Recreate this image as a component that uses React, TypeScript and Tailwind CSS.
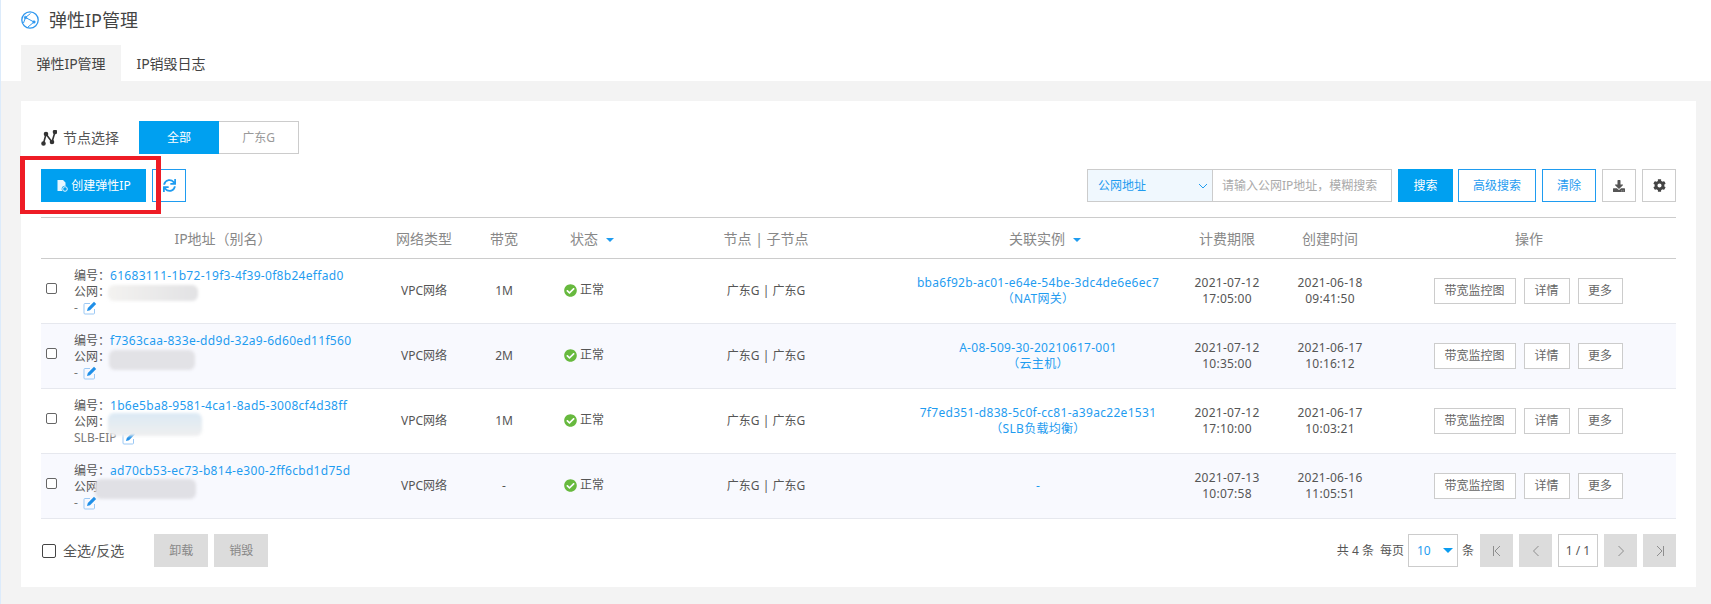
import { FaCheckCircle, FaCog, FaDownload, FaSync } from 'react-icons/fa';

const rows = [
  {
    id: '61683111-1b72-19f3-4f39-0f8b24effad0',
    alias: '-',
    bandwidth: '1M',
    instance: 'bba6f92b-ac01-e64e-54be-3dc4de6e6ec7',
    kind: '（NAT网关）',
    expire: ['2021-07-12', '17:05:00'],
    created: ['2021-06-18', '09:41:50'],
  },
  {
    id: 'f7363caa-833e-dd9d-32a9-6d60ed11f560',
    alias: '-',
    bandwidth: '2M',
    instance: 'A-08-509-30-20210617-001',
    kind: '（云主机）',
    expire: ['2021-07-12', '10:35:00'],
    created: ['2021-06-17', '10:16:12'],
  },
  {
    id: '1b6e5ba8-9581-4ca1-8ad5-3008cf4d38ff',
    alias: 'SLB-EIP',
    bandwidth: '1M',
    instance: '7f7ed351-d838-5c0f-cc81-a39ac22e1531',
    kind: '（SLB负载均衡）',
    expire: ['2021-07-12', '17:10:00'],
    created: ['2021-06-17', '10:03:21'],
  },
  {
    id: 'ad70cb53-ec73-b814-e300-2ff6cbd1d75d',
    alias: '-',
    bandwidth: '-',
    instance: '-',
    kind: '',
    expire: ['2021-07-13', '10:07:58'],
    created: ['2021-06-16', '11:05:51'],
  },
];

// smudges hiding the public IP in the screenshot
const blurs = [
  'left-[67px] top-[26px] h-[16px] w-[90px] bg-gradient-to-r from-[#f3f2f0] to-[#e2e2e4]',
  'left-[68px] top-[26px] h-[20px] w-[86px] bg-[#e2e2e6]',
  'left-[67px] top-[24px] h-[23px] w-[94px] bg-gradient-to-b from-[#dbe9f4] to-[#efefef]',
  'left-[54px] top-[25px] h-[20px] w-[101px] bg-[#e0e0e5]',
];

const Caret = () => <span className="ml-2 inline-block border-x-[4px] border-t-[4px] border-x-transparent border-t-[#1f9cf0] align-middle" />;

const EditIcon = () => (
  <svg viewBox="0 0 14 14" className="h-[14px] w-[14px]">
    <path d="M11.500 8v4a1 1 0 0 1-1 1H2a1 1 0 0 1-1-1V3.500a1 1 0 0 1 1-1h5" fill="none" stroke="#9cc9f5" strokeWidth="1" />
    <path d="M11 .8l2.200 2.200L7 9.200l-3 .8.8-3z" fill="#1f8fe8" />
  </svg>
);

const PageButton = ({ d }: { d: string }) => (
  <button className="flex h-[33px] w-[33px] items-center justify-center bg-[#dcdcdc]">
    <svg viewBox="0 0 14 14" className="h-[14px] w-[14px]">
      <path d={d} fill="none" stroke="#8e8e8e" strokeWidth="1" />
    </svg>
  </button>
);

export default function App() {
  return (
    <div className="h-[604px] overflow-hidden border-l border-[#dcebfb] bg-[#f3f3f3] font-['Noto_Sans','Noto_Sans_CJK_SC',sans-serif] text-[12px] text-[#555]">
      <header className="h-[81px] bg-white pl-[20px]">
        <div className="flex h-[45px] items-center gap-[10px] pb-[5px]">
          <svg viewBox="0 0 18 18" className="h-[18px] w-[18px]" fill="none" stroke="#2f97ee">
            <circle cx="9" cy="9" r="8.200" strokeWidth="1.300" />
            <path d="M4.500 6.500L9.500 2.500M4.500 6.500l8.500 4.500M13 11l-6 5M2.500 12l2-5.500" strokeWidth="1" />
            <circle cx="4.500" cy="6.500" r="1.300" fill="#2f97ee" strokeWidth="0.500" />
            <circle cx="13" cy="11" r="1.300" fill="#2f97ee" strokeWidth="0.500" />
          </svg>
          <h1 className="text-[18px] font-normal text-[#444]">弹性IP管理</h1>
        </div>
        <nav className="flex h-[36px] text-[14px]">
          <a className="flex w-[100px] items-center justify-center bg-[#f3f3f3] text-[#444]">弹性IP管理</a>
          <a className="flex w-[100px] items-center justify-center text-[#444]">IP销毁日志</a>
        </nav>
      </header>

      <main className="ml-[20px] mt-[20px] h-[486px] w-[1675px] bg-white pl-[20px] pr-[20px] pt-[20px]">
        <div className="flex h-[33px] items-center">
          <svg viewBox="0 0 16 16" className="h-[16px] w-[16px]" fill="none" stroke="#333" strokeWidth="1.600">
            <path d="M2.500 13.500L5 4l6 8 3-10" />
            <circle cx="2.500" cy="13.500" r="1.500" fill="#333" />
            <circle cx="5" cy="4" r="1.500" fill="#333" />
            <circle cx="11" cy="12" r="1.500" fill="#333" />
            <circle cx="14" cy="2" r="1.500" fill="#333" />
          </svg>
          <span className="ml-[6px] w-[76px] text-[14px] text-[#555]">节点选择</span>
          <button className="h-[33px] w-[80px] bg-[#00a0f0] text-white">全部</button>
          <button className="h-[33px] w-[80px] border border-l-0 border-[#ccc] text-[#999]">广东G</button>
        </div>

        <div className="mt-[15px] flex h-[33px] items-center">
          <div className="relative">
            <button className="flex h-[33px] w-[105px] items-center justify-center gap-[3px] bg-[#00a0f0] text-white">
              <svg viewBox="0 0 12 12" className="h-[12px] w-[12px]" fill="#e6f6ff">
                <path d="M1.500 0H7l2.500 2.500V6a3 3 0 0 0-3 5H1.500z" />
                <circle cx="9" cy="9" r="2.300" fill="none" stroke="#e6f6ff" />
              </svg>
              创建弹性IP
            </button>
            <div className="pointer-events-none absolute -left-[21px] -top-[13px] h-[58px] w-[141px] border-x-[5px] border-y-[4px] border-[#ee1c25]" />
          </div>
          <button className="ml-[6px] flex h-[33px] w-[34px] items-center justify-center border border-[#1f9cf0] text-[#1f9cf0]">
            <FaSync className="h-[13px] w-[13px]" />
          </button>

          <div className="ml-auto flex h-[33px] items-center">
            <div className="flex h-full w-[126px] items-center justify-between border border-[#ccc] bg-[#f0f8fe] pl-[10px] pr-[4px] text-[#1f9cf0]">
              公网地址
              <svg viewBox="0 0 10 10" className="h-[10px] w-[10px]" fill="none" stroke="#1f9cf0" strokeWidth="1">
                <path d="M1 3l4 4 4-4" />
              </svg>
            </div>
            <input
              placeholder="请输入公网IP地址，模糊搜索"
              className="h-full w-[179px] border border-l-0 border-[#ccc] px-[9px] text-[12px] outline-none placeholder:text-[#aaa]"
            />
            <button className="ml-[6px] h-full w-[55px] bg-[#00a0f0] text-white">搜索</button>
            <button className="ml-[5px] h-full w-[78px] border border-[#1f9cf0] text-[#1f9cf0]">高级搜索</button>
            <button className="ml-[6px] h-full w-[54px] border border-[#1f9cf0] text-[#1f9cf0]">清除</button>
            <button className="ml-[6px] flex h-full w-[34px] items-center justify-center border border-[#ccc] text-[#555]">
              <FaDownload className="h-[12px] w-[12px]" />
            </button>
            <button className="ml-[6px] flex h-full w-[34px] items-center justify-center border border-[#ccc] text-[#444]">
              <FaCog className="h-[13px] w-[13px]" />
            </button>
          </div>
        </div>

        <table className="mt-[15px] w-[1635px] table-fixed border-collapse">
          <colgroup>
            <col className="w-[351px]" />
            <col className="w-[64px]" />
            <col className="w-[96px]" />
            <col className="w-[80px]" />
            <col className="w-[268px]" />
            <col className="w-[276px]" />
            <col className="w-[102px]" />
            <col className="w-[104px]" />
            <col className="w-[294px]" />
          </colgroup>
          <thead>
            <tr className="h-[41px] border-y border-[#ccc] text-[14px] text-[#888]">
              <th className="pl-[13px] font-normal whitespace-nowrap">IP地址（别名）</th>
              <th className="font-normal whitespace-nowrap">网络类型</th>
              <th className="font-normal">带宽</th>
              <th className="font-normal whitespace-nowrap">
                状态
                <Caret />
              </th>
              <th className="font-normal">节点 | 子节点</th>
              <th className="pl-[14px] font-normal">
                关联实例
                <Caret />
              </th>
              <th className="font-normal whitespace-nowrap">计费期限</th>
              <th className="font-normal whitespace-nowrap">创建时间</th>
              <th className="font-normal">操作</th>
            </tr>
          </thead>
          <tbody>
            {rows.map((row, i) => (
              <tr key={row.id} className={`h-[65px] border-b border-[#e6e8ee] text-center leading-[16.300px] ${i % 2 === 1 ? 'bg-[#f8f9fe]' : 'bg-white'}`}>
                <td className="relative text-left">
                  <div className="flex items-center pl-[5px]">
                    <input type="checkbox" className="mb-[4px] h-[11px] w-[11px] appearance-none rounded-[2px] border border-[#666] bg-white" />
                    <div className="ml-[17px] mt-[2px] whitespace-nowrap">
                      <div>
                        编号：<span className="tracking-[0.3px] text-[#1f9cf0]">{row.id}</span>
                      </div>
                      <div>公网：</div>
                      <div className="flex items-center gap-[5px] text-[#777]">
                        {row.alias}
                        <EditIcon />
                      </div>
                    </div>
                  </div>
                  <div className={`absolute rounded-[6px] blur-[1.500px] ${blurs[i]}`} />
                </td>
                <td className="whitespace-nowrap pt-px">VPC网络</td>
                <td className="pt-px">{row.bandwidth}</td>
                <td className="pr-[16px] pt-px">
                  <span className="inline-flex items-center gap-[3px] whitespace-nowrap">
                    <FaCheckCircle className="h-[13px] w-[13px] text-[#67b93e]" />
                    正常
                  </span>
                </td>
                <td className="pt-px">广东G | 广东G</td>
                <td className="tracking-[0.3px] text-[#1f9cf0]">
                  <div>{row.instance}</div>
                  {row.kind && <div>{row.kind}</div>}
                </td>
                <td className="tracking-[0.25px]">
                  <div>{row.expire[0]}</div>
                  <div>{row.expire[1]}</div>
                </td>
                <td className="tracking-[0.25px]">
                  <div>{row.created[0]}</div>
                  <div>{row.created[1]}</div>
                </td>
                <td className="pr-[2px]">
                  <div className="flex items-center justify-center gap-[8px]">
                    <button className="h-[26px] w-[82px] border border-[#ccc] bg-white text-[#666]">带宽监控图</button>
                    <button className="h-[26px] w-[46px] border border-[#ccc] bg-white text-[#666]">详情</button>
                    <button className="h-[26px] w-[45px] border border-[#ccc] bg-white text-[#666]">更多</button>
                  </div>
                </td>
              </tr>
            ))}
          </tbody>
        </table>

        <div className="mt-[15px] flex h-[33px] items-center">
          <label className="flex items-center gap-[7px] pl-px text-[14px]">
            <input type="checkbox" className="h-[14px] w-[14px] appearance-none rounded-[2px] border border-[#444] bg-white" />
            全选/反选
          </label>
          <button className="ml-[30px] h-[33px] w-[54px] bg-[#dcdcdc] text-[#888]">卸载</button>
          <button className="ml-[6px] h-[33px] w-[54px] bg-[#dcdcdc] text-[#888]">销毁</button>

          <div className="ml-auto flex h-full items-center">
            <span className="whitespace-pre">共 4 条</span>
            <span className="ml-[6px]">每页</span>
            <div className="ml-[4px] flex h-full w-[50px] items-center justify-between border border-[#ccc] pl-[8px] pr-[4px] text-[#1f9cf0]">
              10
              <span className="border-x-[5px] border-t-[5px] border-x-transparent border-t-[#0a9cf0]" />
            </div>
            <span className="ml-[4px] mr-[6px]">条</span>
            <div className="flex h-full items-center gap-[6px]">
              <PageButton d="M3.500 2v10M10 2L5 7l5 5" />
              <PageButton d="M9.500 2l-5 5 5 5" />
              <div className="flex h-full w-[40px] items-center justify-center border border-[#ccc] text-[#555]">1 / 1</div>
              <PageButton d="M4.500 2l5 5-5 5" />
              <PageButton d="M10.500 2v10M4 2l5 5-5 5" />
            </div>
          </div>
        </div>
      </main>
    </div>
  );
}
